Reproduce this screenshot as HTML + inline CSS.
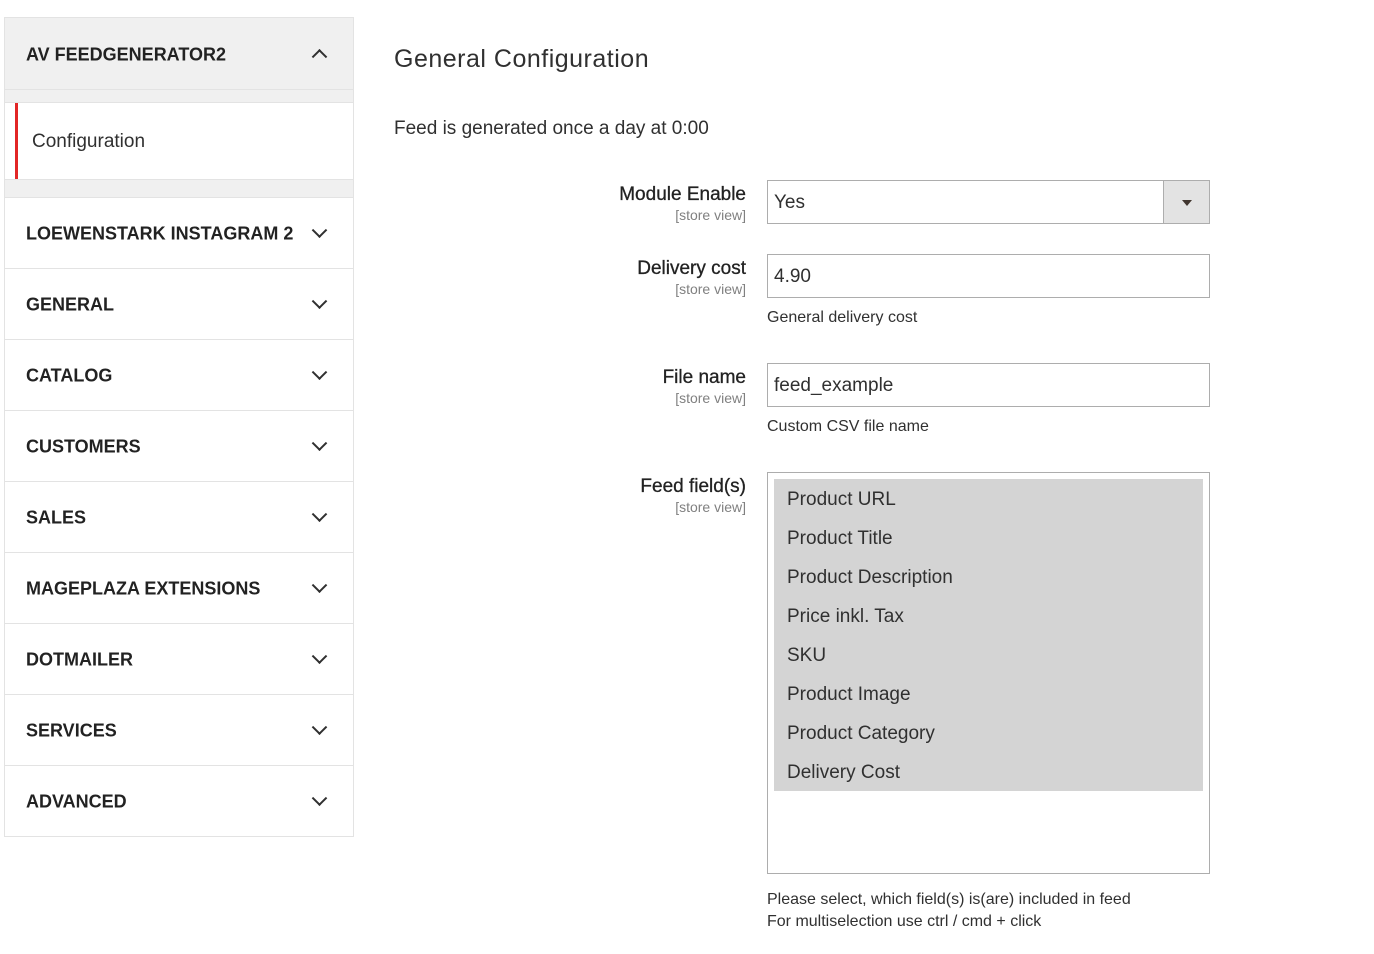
<!DOCTYPE html><html><head><style>
body{margin:0;background:#fff;font-family:"Liberation Sans",sans-serif;color:#303030;width:1374px;height:954px;position:relative;overflow:hidden}
.a{position:absolute}
.side{left:4px;top:17px;width:348px;border:1px solid #e3e3e3;border-bottom:none}
.hd{height:71px;background:#f0f0f0;border-bottom:1px solid #e3e3e3;position:relative}
.it{height:70px;border-bottom:1px solid #e3e3e3;position:relative;background:#fff}
.t{position:absolute;left:21px;top:50%;transform:translateY(-45%);font-weight:bold;font-size:18px;color:#222}
.ch{position:absolute;right:28px;top:50%;width:9px;height:9px;border-right:2px solid #303030;border-bottom:2px solid #303030;transform:translateY(-75%) rotate(45deg)}
.up{transform:translateY(-25%) rotate(-135deg)}
.lab{position:absolute;right:628px;text-align:right;font-size:19px;color:#222;line-height:22px;-webkit-text-stroke:0.3px #222}
.lab small{display:block;font-size:14px;color:#808080;line-height:18px;-webkit-text-stroke:0}
.in{position:absolute;left:767px;width:441px;height:42px;border:1px solid #adadad;font-size:19px;line-height:44px;text-indent:6px;box-sizing:content-box}
.note{position:absolute;left:767px;font-size:16px;color:#303030}
.ms div{height:39px;line-height:41px;padding-left:13px;font-size:19px}
</style></head><body>
<div class="a side">
<div class="hd"><span class="t">AV FEEDGENERATOR2</span><span class="ch up"></span></div>
<div style="height:12px;background:#f0f0f0;border-bottom:1px solid #e3e3e3"></div>
<div style="height:76px;background:#fff;position:relative"><div style="position:absolute;left:10px;top:0;width:3px;height:76px;background:#e22626"></div><span style="position:absolute;left:27px;top:28px;font-size:19px">Configuration</span></div>
<div style="height:17px;background:#f0f0f0;border-top:1px solid #e3e3e3;border-bottom:1px solid #e3e3e3"></div>
<div class="it"><span class="t">LOEWENSTARK INSTAGRAM 2</span><span class="ch"></span></div>
<div class="it"><span class="t">GENERAL</span><span class="ch"></span></div>
<div class="it"><span class="t">CATALOG</span><span class="ch"></span></div>
<div class="it"><span class="t">CUSTOMERS</span><span class="ch"></span></div>
<div class="it"><span class="t">SALES</span><span class="ch"></span></div>
<div class="it"><span class="t">MAGEPLAZA EXTENSIONS</span><span class="ch"></span></div>
<div class="it"><span class="t">DOTMAILER</span><span class="ch"></span></div>
<div class="it"><span class="t">SERVICES</span><span class="ch"></span></div>
<div class="it"><span class="t">ADVANCED</span><span class="ch"></span></div>
</div>
<div class="a" style="left:394px;top:45px;font-size:25px;color:#303030;letter-spacing:0.5px">General Configuration</div>
<div class="a" style="left:394px;top:118px;font-size:19px">Feed is generated once a day at 0:00</div>
<div class="lab" style="top:184px">Module Enable<small>[store view]</small></div>
<div class="in" style="top:180px">Yes<div style="position:absolute;right:0;top:0;width:45px;height:42px;background:#e3e3e3;border-left:1px solid #adadad"><div style="position:absolute;left:18px;top:19px;border-left:5px solid transparent;border-right:5px solid transparent;border-top:6px solid #41362f"></div></div></div>
<div class="lab" style="top:258px">Delivery cost<small>[store view]</small></div>
<div class="in" style="top:254px">4.90</div>
<div class="note" style="top:309px">General delivery cost</div>
<div class="lab" style="top:367px">File name<small>[store view]</small></div>
<div class="in" style="top:363px">feed_example</div>
<div class="note" style="top:418px">Custom CSV file name</div>
<div class="lab" style="top:476px">Feed field(s)<small>[store view]</small></div>
<div class="a" style="left:767px;top:472px;width:441px;height:400px;border:1px solid #adadad">
<div class="ms" style="margin:6px;background:#d4d4d4">
<div>Product URL</div><div>Product Title</div><div>Product Description</div><div>Price inkl. Tax</div><div>SKU</div><div>Product Image</div><div>Product Category</div><div>Delivery Cost</div></div></div>
<div class="note" style="top:889px;line-height:22px">Please select, which field(s) is(are) included in feed<br>For multiselection use ctrl / cmd + click</div>
</body></html>
